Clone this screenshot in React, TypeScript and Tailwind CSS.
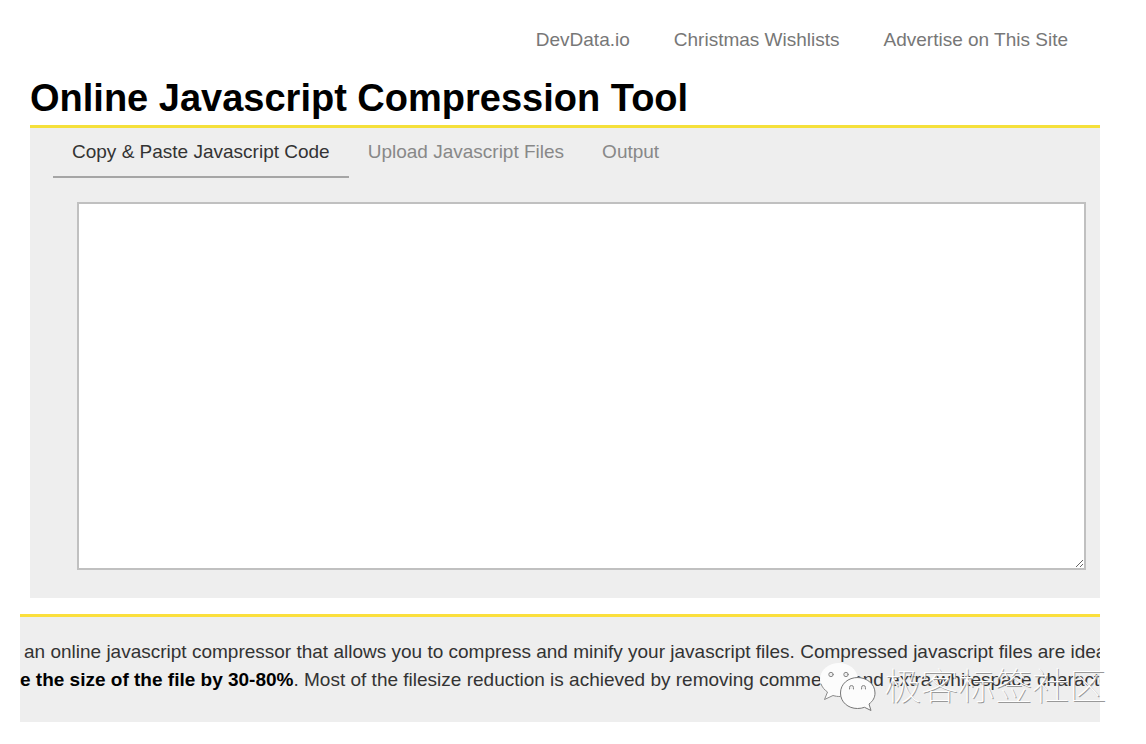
import React, { useState } from "react";

const links = ["DevData.io", "Christmas Wishlists", "Advertise on This Site"];
const tabs = ["Copy & Paste Javascript Code", "Upload Javascript Files", "Output"];

function TopNav() {
  return (
    <nav className="flex justify-end gap-11 pr-8 pt-7 text-[19px] leading-6 text-[#777777]">
      {links.map((link) => (
        <a key={link} href="#" className="hover:text-black">
          {link}
        </a>
      ))}
    </nav>
  );
}

function WechatIcon() {
  return (
    <svg
      viewBox="0 0 56 50"
      className="h-[50px] w-14 shrink-0 overflow-visible"
      fill="#fcfcfc"
      strokeLinejoin="round"
      strokeLinecap="round"
      aria-hidden="true"
    >
      <path d="M19 1C8.500 1 0 8 0 17.500c0 5.500 3 9.500 7 12.500l-2.500 7.500L13 33.500c3 .8 5 1 8 1L38 16C37 7.500 29 1 19 1Z" />
      <path
        fill="none"
        stroke="#8a8a8a"
        d="M1 22c1 3 3.500 6 6.500 8l-3 7.500L13 33.500c3 .8 4 1 7 1"
      />
      <path
        stroke="#777777"
        d="M37.500 15.500c-9.500 0-17 6.500-17 15.500s7.500 15.500 17 15.500c2.500 0 5-.4 7-1.200l6.500 3.200-2-6.500c4-3 6-6.500 6-11 0-9-8-15.500-17.500-15.500Z"
      />
      <g fill="#eeeeee" stroke="#888888">
        <circle cx="11" cy="12.500" r="2.200" />
        <circle cx="26" cy="12.500" r="2.200" />
        <path d="M29.500 27v-1.500a2 2 0 0 1 4 0V27M41.500 27v-1.500a2 2 0 0 1 4 0V27" />
      </g>
    </svg>
  );
}

export default function App() {
  const [active, setActive] = useState(0);
  const [code, setCode] = useState("");

  return (
    <div className="relative min-h-screen bg-white pb-5 pl-5 pr-[46px] font-['Liberation_Sans',Arial,sans-serif]">
      <div className="pl-[10px]">
        <TopNav />
        <h1 className="pb-[3px] pt-[22px] text-[38px] font-bold leading-[48px] text-black">
          Online Javascript Compression Tool
        </h1>

        <main className="border-t-[3px] border-[#f5e03a] bg-[#eeeeee] pb-7">
          <div role="tablist" className="flex pl-[23px] text-[19px] leading-6">
            {tabs.map((tab, i) => (
              <button
                key={tab}
                type="button"
                role="tab"
                aria-selected={active === i}
                onClick={() => setActive(i)}
                className={
                  active === i
                    ? "border-b-2 border-[#a5a5a5] px-[19px] pb-3 pt-3 text-[#333333]"
                    : "border-b-2 border-transparent px-[19px] pb-3 pt-3 text-[#888888]"
                }
              >
                {tab}
              </button>
            ))}
          </div>
          <div className="flex pl-[47px] pr-[14px] pt-6">
            <textarea
              aria-label="Javascript code"
              value={code}
              onChange={(e) => setCode(e.target.value)}
              className="h-[368px] w-full resize border-2 border-[#c0c0c0] bg-white p-2 font-mono text-base outline-none"
            />
          </div>
        </main>
      </div>

      {/* Description strip, text runs off the right edge */}
      <section className="relative mt-4 border-t-[3px] border-[#fbdf3c] bg-[#eeeeee] pb-7 pt-[21px] text-[19px] leading-7 text-[#333333]">
        <div className="overflow-hidden whitespace-nowrap">
          <p className="pl-1">
            an online javascript compressor that allows you to compress and minify your javascript files. Compressed javascript files are ideal
          </p>
          <p>
            <strong className="text-black">e the size of the file by 30-80%</strong>. Most of the filesize reduction is achieved by removing comments and extra whitespace characters
          </p>
        </div>

        {/* Watermark */}
        <div className="absolute -right-1.5 top-[45px] flex items-start gap-2">
          <WechatIcon />
          <span className="whitespace-nowrap font-['Noto_Sans_CJK_SC',sans-serif] text-[37px] font-thin leading-[44px] text-white [text-shadow:1px_1px_0_#999999]">
            极客标签社区
          </span>
        </div>
      </section>
    </div>
  );
}
